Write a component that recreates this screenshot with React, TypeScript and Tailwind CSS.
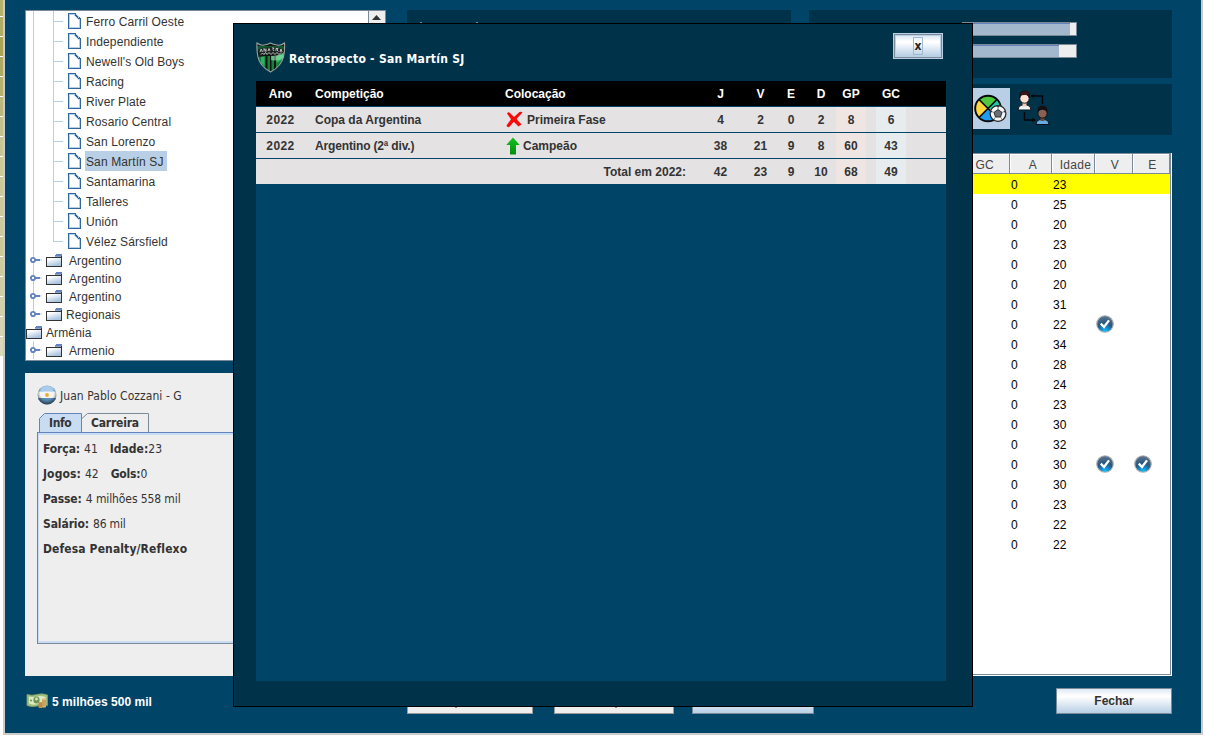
import React from "react";

const sans = "font-['Liberation_Sans',Arial,sans-serif]";
const tahoma = "font-['DejaVu_Sans_Condensed','DejaVu_Sans',sans-serif]";

const strips = [
  "bg-[#b5b16b]", "bg-[#b0ac62]", "bg-[#a9a552]", "bg-[#aeaa60]", "bg-[#b5b26f]", "bg-[#bcb87c]",
  "bg-[#c3c08a]", "bg-[#c8c592]", "bg-[#cac896]", "bg-[#cbc997]", "bg-[#cdcb9b]", "bg-[#cccb9b]",
  "bg-[#cbc998]", "bg-[#cdcb9c]", "bg-[#cfcda3]", "bg-[#d2d0a9]", "bg-[#d5d4b0]", "bg-[#d9d8b8]",
];

const DocIcon = () => (
  <svg width="13" height="16" viewBox="0 0 13 16" shapeRendering="crispEdges">
    <path d="M0 0H8L13 6V16H0Z" fill="#30659d" />
    <path d="M1 1H7L12 7V15H1Z" fill="#b8cfe5" />
    <path d="M2 2H6L11 8V14H2Z" fill="#fff" />
    <path d="M7 0h1v1h1v1h1v1h1v2h1v1h-2v-1h-1v-1h-1v-1h-1z" fill="#30659d" />
    <path d="M8 1h1v1h1v1h1v2h-1v-1h-1v-1h-1z" fill="#b8cfe5" />
    <path d="M8 2h1v1h1v1h-1v-1h-1z" fill="#30659d" />
  </svg>
);

const FolderIcon = () => (
  <svg width="16" height="13" viewBox="0 0 16 13" shapeRendering="crispEdges">
    <defs>
      <linearGradient id="fold" x1="0" y1="0" x2="0.5" y2="1">
        <stop offset="0.2" stopColor="#fff" />
        <stop offset="1" stopColor="#a9c3e0" />
      </linearGradient>
    </defs>
    <rect x="0" y="3" width="16" height="10" fill="#333" />
    <rect x="1" y="4" width="14" height="8" fill="url(#fold)" />
    <path d="M10 0h6v2h-7v-1h1z" fill="#6382bf" />
    <path d="M9 2h6v1h-6z" fill="#8aa5d4" />
    <rect x="15" y="2" width="1" height="11" fill="#333" />
  </svg>
);

const Handle = () => (
  <svg width="12" height="8" viewBox="0 0 12 8">
    <path d="M10 4H12" stroke="#b8cfe5" />
    <path d="M5 4H10" stroke="#6382bf" strokeWidth="2" />
    <circle cx="3" cy="4" r="2.1" fill="#fff" stroke="#6382bf" strokeWidth="1.9" />
  </svg>
);

const Leaf = ({ name, selected, last }: { name: string; selected?: boolean; last?: boolean }) => (
  <div className="flex h-5 shrink-0">
    <div className="ml-[7px] h-5 w-5 shrink-0 border-l border-[#b8cfe5]" />
    <div className={last ? "h-[11px] w-[10px] border-b border-l border-[#b8cfe5]" : "h-[11px] w-[10px] border-b border-[#b8cfe5]"}>
      {!last && <div className="h-5 w-px bg-[#b8cfe5]" />}
    </div>
    <div className="ml-[5px] mt-[2px]"><DocIcon /></div>
    <span className={selected ? "ml-[4px] h-5 bg-[#b8cfe5] pl-px pr-[3px] leading-[22px]" : "ml-[5px] leading-[22px]"}>{name}</span>
  </div>
);

const Branch = ({ name, wide, end }: { name: string; wide?: boolean; end?: boolean }) => (
  <div className="flex h-[18px] shrink-0">
    <div className="grid w-[17px] shrink-0 grid-cols-1 grid-rows-1 pl-[5px]">
      <div className={end ? "col-start-1 row-start-1 ml-[2px] h-[9px] w-px bg-[#b8cfe5]" : "col-start-1 row-start-1 ml-[2px] h-[18px] w-px bg-[#b8cfe5]"} />
      <div className="col-start-1 row-start-1 -ml-px mt-[5px]"><Handle /></div>
    </div>
    <div className="ml-[3px] mt-[3px]"><FolderIcon /></div>
    <span className={wide ? "ml-[7px] leading-[20px]" : "ml-[4px] leading-[20px]"}>{name}</span>
  </div>
);

const leaves = ["Ferro Carril Oeste", "Independiente", "Newell's Old Boys", "Racing", "River Plate", "Rosario Central", "San Lorenzo", "San Martín SJ", "Santamarina", "Talleres", "Unión", "Vélez Sársfield"];

const Flag = () => (
  <svg width="20" height="20" viewBox="0 0 20 20">
    <defs>
      <clipPath id="gl"><circle cx="10" cy="10" r="9.5" /></clipPath>
      <radialGradient id="sh" cx=".5" cy=".4" r=".62">
        <stop offset=".55" stopColor="#000" stopOpacity="0" />
        <stop offset="1" stopColor="#111" stopOpacity=".75" />
      </radialGradient>
    </defs>
    <g clipPath="url(#gl)">
      <rect width="20" height="20" fill="#f5f5f5" />
      <rect width="20" height="6.5" fill="#83b7e0" />
      <rect y="13" width="20" height="7" fill="#5a8fb9" />
      <circle cx="10" cy="10" r="1.9" fill="#f0a92c" />
      <ellipse cx="10" cy="4" rx="7" ry="3" fill="#fff" opacity=".3" />
      <rect width="20" height="20" fill="url(#sh)" />
    </g>
  </svg>
);

const Tick = () => (
  <svg width="18" height="18" viewBox="0 0 18 18">
    <defs>
      <radialGradient id="tk" cx=".5" cy=".95" r=".85">
        <stop offset="0" stopColor="#12c4ff" />
        <stop offset=".3" stopColor="#118bd0" />
        <stop offset=".6" stopColor="#28567c" />
        <stop offset="1" stopColor="#53718e" />
      </radialGradient>
    </defs>
    <circle cx="9" cy="9" r="8.3" fill="url(#tk)" stroke="#b4b2ae" strokeWidth="1.1" />
    <path d="M4.8 8.6 8 12 13 5.4" fill="none" stroke="#fff" strokeWidth="2.3" />
  </svg>
);

const Money = () => (
  <svg width="23" height="16" viewBox="0 0 23 16">
    <path d="M1 1.500Q6 3 11 1.500T21.500 2V12.500Q16 11.500 11 13T1 12.500Z" fill="#9fc07f" stroke="#7f9f62" strokeWidth=".8" />
    <path d="M3 3.500Q7 4.500 11 3.500T19.500 4V10.500Q15 10 11 11.200T3 10.500Z" fill="#dbe9c6" />
    <ellipse cx="10.500" cy="7" rx="3.100" ry="3.500" fill="#6d9653" />
    <circle cx="10.500" cy="6" r="1.400" fill="#d9e6c6" />
    <circle cx="5" cy="7.500" r="1" fill="#6d9653" />
    <rect x="12.500" y="9" width="4" height="6" rx="1" fill="#c79a55" />
    <rect x="16" y="5.500" width="4" height="9" rx="1" fill="#dfb875" />
    <path d="M16 8h4M16 10h4M16 12h4M12.500 11h4M12.500 13h4" stroke="#9b6c2b" strokeWidth=".6" />
  </svg>
);

const crestPath = "M1 1Q5 4 8 3Q12 2.500 14.500 1Q17 2.500 21 3Q25 4 28.500 1Q29 8 27.500 15Q25.500 24 14.500 30Q3.500 24 2 15Q.5 8 1 1Z";

const Crest = () => (
  <svg width="30" height="31" viewBox="0 0 30 31">
    <defs><clipPath id="cr"><path d={crestPath} /></clipPath></defs>
    <g clipPath="url(#cr)">
      <rect width="30" height="31" fill="#101513" />
      <path d="M1 4H28V8Q15 4 1 9Z" fill="#1a8f49" opacity=".55" />
      <path d="M2 15L9.500 14V31H2ZM11.500 14H14V31H11.500ZM15.500 14H18V31H15.500ZM20 14L28 12V29H20Z" fill="#14803b" />
      <path d="M5 15L8.500 14.500V24L5 21ZM20.500 14L27.500 12V17L20.500 21Z" fill="#2bb263" />
      <path d="M2 7.500Q15 3 28 7.500L26 13Q15 10 3.500 14Z" fill="#1d2321" />
      <path d="M15 14Q22 14 28 10V15Q23 20 15 18Z" fill="#a6ecc0" opacity=".55" />
    </g>
    <path d={crestPath} fill="none" stroke="#9aa5a0" strokeWidth="1.1" />
    <path d="M4 10l1.200-3 1.300 3M8 9.500v-3l2 3v-3M12 9l1-2.500 1 2.500M16 6h2l-1 1.500 1 1.500M20 9V6.500h2L21 8l1.500 1.500M24 10l1-3 1 3M5 12.500l1.500-1.500 1.500 1.500 1.500-2 1.500 2 2-2 2 2 2-2 2 2 2-2 2 2 2-2" fill="none" stroke="#c9cfcc" strokeWidth=".9" />
  </svg>
);

const PieBall = () => (
  <svg width="34" height="32" viewBox="0 0 34 32">
    <circle cx="14" cy="15.500" r="12.800" fill="#ffd83d" />
    <path d="M14 15.500L5 6Q14-1.500 23 6Z" fill="#4fc93f" />
    <path d="M14 15.500L23 6Q27 10 27 18Z" fill="#17d0b4" />
    <path d="M14 15.500L5 25Q14 32 24 25Z" fill="#1f9cf0" />
    <circle cx="14" cy="15.500" r="12.800" fill="none" stroke="#0a0a0a" strokeWidth="1.900" />
    <path d="M5 6.500L23 24.500M23 6.500L5 24.500" stroke="#0a0a0a" strokeWidth="1.700" />
    <circle cx="24" cy="20.500" r="7.900" fill="#f5f5f5" stroke="#222" strokeWidth="1.200" />
    <path d="M24 16.500L28 19.400L26.500 24H21.500L20 19.400Z" fill="#66707a" stroke="#222" strokeWidth=".9" />
    <path d="M24 16.500V13M28 19.400L31.500 18.200M26.500 24L28.500 27M21.500 24L19.500 27M20 19.400L16.500 18.200" stroke="#777" strokeWidth=".8" />
    <path d="M22 12.500h4l-2 2zM31.500 16.500v4l-1.800-2zM27 27.500l3-2.500-.5 2zM18.500 25l3 2.800-2-.5zM16.400 16.500v4l1.800-2z" fill="#333" />
  </svg>
);

const Swap = () => (
  <svg width="33" height="36" viewBox="0 0 33 36">
    <path d="M14.500 6H25.500V14M7.500 22V30H17" fill="none" stroke="#050708" strokeWidth="1.500" />
    <path d="M13.500 6l3-2v4zM19 30l-3.500-2.200v4.400z" fill="#050708" />
    <path d="M1 20Q1 15.500 5 15H10Q14 15.500 14 20Z" fill="#eef3f6" stroke="#0a1218" />
    <rect x="5.500" y="12" width="4" height="4.500" fill="#f2c7b4" />
    <circle cx="7.500" cy="8.500" r="4.700" fill="#ffe0d4" stroke="#1a0c0c" strokeWidth=".9" />
    <path d="M2.500 8Q1.500 1.500 7 1Q13.500 0 12.500 8Q11.500 5 9 4.500Q5 5 4 4.500Z" fill="#3a161a" stroke="#0d0708" strokeWidth=".6" />
    <path d="M19 34.500Q19 30 23 29.500H28Q32 30 32 34.500Z" fill="#62aee4" stroke="#0a1218" />
    <rect x="23.500" y="27" width="4" height="4" fill="#6e4b41" />
    <circle cx="25.500" cy="23.500" r="4.600" fill="#886054" stroke="#120c0c" strokeWidth=".9" />
    <path d="M20.500 22.500Q20 15.500 25.500 15.500Q31 15.500 30.500 22.500Q29 19.500 25.500 19.800Q22 19.500 20.500 22.500Z" fill="#141012" />
  </svg>
);

const ages = [23, 25, 20, 23, 20, 20, 31, 22, 34, 28, 24, 23, 30, 32, 30, 30, 23, 22, 22];

const heads = [
  { t: "GC", c: "pr-[15px] text-right" },
  { t: "A", c: "pl-[4px]" },
  { t: "Idade", c: "pl-[4px]" },
  { t: "V", c: "pl-[2px]" },
  { t: "E", c: "pl-[2px]" },
];

const metal = "bg-[linear-gradient(180deg,#dde8f3_0%,#ffffff_28%,#ffffff_32%,#b8cfe5_100%)]";
const cols = "grid grid-cols-[49px_191px_200px_49px_31px_30px_30px_30px_10px_30px_40px] text-center";

function Cells({ v }: { v: string[] }) {
  return (
    <>
      <span>{v[0]}</span><span>{v[1]}</span><span>{v[2]}</span><span>{v[3]}</span>
      <span className="h-[25px] bg-[#efe6e3]">{v[4]}</span>
      <span />
      <span className="h-[25px] bg-[#e7edef]">{v[5]}</span>
    </>
  );
}

export default function App() {
  return (
    <div className={`relative flex h-[740px] w-[1205px] overflow-hidden bg-white text-xs ${sans}`}>
      <div className="w-[3px]">
        <div className="h-4 bg-[#b5b16b]" />
        {strips.slice(1).map((c, i) => (
          <div key={i} className="h-5 border-t border-white"><div className={`h-[19px] w-[3px] ${c}`} /></div>
        ))}
      </div>
      <div className="flex h-[735px] w-[1200px] shrink-0 flex-col border-x-2 border-b-2 border-[#cbcbcb] bg-[#004468] px-[20px] pt-[10px]">
        <div className="flex h-[666px]">
          <div className="flex w-[361px] shrink-0 flex-col gap-3">
            <div className="flex h-[351px] border border-b-0 border-[#7a8a99] bg-white">
              <div className="flex h-[350px] flex-1 flex-col overflow-hidden border-b border-[#7a8a99] text-[12px] tracking-[0.12px] text-[#333]">
                {leaves.map((n, i) => <Leaf key={n} name={n} selected={i === 7} last={i === 11} />)}
                <Branch name="Argentino" wide />
                <Branch name="Argentino" wide />
                <Branch name="Argentino" wide />
                <Branch name="Regionais" end />
                <div className="flex h-[18px] shrink-0"><div className="mt-[3px]"><FolderIcon /></div><span className="ml-[4px] leading-[20px]">Armênia</span></div>
                <Branch name="Armenio" wide />
              </div>
              <div className="w-[17px] border-l border-[#7a8a99] bg-[#eee] pl-[3px] pt-[4px]">
                <svg width="9" height="5"><path d="M0 5L4.500 0L9 5Z" fill="#333" /></svg>
              </div>
            </div>
            <div className={`flex h-[303px] flex-col bg-[#eee] pl-3 text-[#333] ${tahoma}`}>
              <div className="mt-[12px] flex h-5 items-center"><Flag /><span className="ml-[3px] pt-px tracking-[0.06px]">Juan Pablo Cozzani - G</span></div>
              <div className="ml-[2px] mt-[8px] flex h-[19px] font-bold">
                <div className="grid w-[43px]">
                  <svg className="col-start-1 row-start-1" width="43" height="19"><path d="M.5 19V5.500L5.500 .5H42.500V19" fill="#c8ddf2" stroke="#6382bf" /></svg>
                  <span className="col-start-1 row-start-1 pl-[10px] leading-[20px] tracking-[-0.35px]">Info</span>
                </div>
                <div className="grid w-[67px]">
                  <svg className="col-start-1 row-start-1" width="67" height="19"><path d="M0 5.500L5.500 .5H66.500V19" fill="none" stroke="#7a8a99" /></svg>
                  <span className="col-start-1 row-start-1 pl-[9px] leading-[20px] tracking-[-0.2px]">Carreira</span>
                </div>
              </div>
              <div className="h-[212px] border border-b-[#7a8a99] border-l-[#6382bf] border-t-[#6382bf]">
                <div className="h-[210px] border-b-2 border-l border-t-2 border-[#c8ddf2] pl-[4px] pt-[2px] leading-[25px]">
                  <div className="flex"><b className="tracking-[-0.1px]">Força:</b><span className="ml-[4px]">41</span><b className="ml-[12px] tracking-[0.02px]">Idade:</b>23</div>
                  <div className="flex"><b className="tracking-[0.1px]">Jogos:</b><span className="ml-[4px]">42</span><b className="ml-[12px] tracking-[-0.2px]">Gols:</b>0</div>
                  <div className="flex"><b className="tracking-[-0.1px]">Passe:</b><span className="ml-[4px] tracking-[-0.1px]">4 milhões 558 mil</span></div>
                  <div className="flex"><b className="tracking-[-0.1px]">Salário:</b><span className="ml-[4px] tracking-[-0.2px]">86 mil</span></div>
                  <b className="tracking-[0.12px]">Defesa Penalty/Reflexo</b>
                </div>
              </div>
            </div>
          </div>
          <div className="ml-[21px] flex w-[765px] shrink-0 flex-col">
            <div className="flex h-[68px] gap-[18px]">
              <div className="flex w-[384px] bg-[#003349] pl-[13px] pt-[12px]"><i className="h-px w-[2px] bg-[#70828c]" /><i className="ml-[54px] h-px w-[2px] bg-[#70828c]" /></div>
              <div className="flex w-[363px] flex-col gap-2 bg-[#003349] pl-[153px] pt-[12px]">
                <div className="h-[14px] w-[115px] border border-[#7a8a99] bg-[#eee]"><div className="h-3 w-[107px] border-t border-[#6382bf] bg-[#a3b8cc]" /></div>
                <div className="h-[14px] w-[115px] border border-[#7a8a99] bg-[#eee]"><div className="h-3 w-[96px] border-t border-[#6382bf] bg-[#a3b8cc]" /></div>
              </div>
            </div>
            <div className="mt-[6px] flex h-[51px] bg-[#003349] pl-[563px] pt-[4px]">
              <div className="h-[41px] w-[40px] bg-[#b8cfe5] pl-[4px] pt-[5px]"><PieBall /></div>
              <div className="ml-[7px] mt-[2px]"><Swap /></div>
            </div>
            <div className="mt-[18px] flex h-[523px] flex-col border-b border-r border-white">
              <div className="flex h-[522px] flex-col border border-[#7a8a99] bg-white">
                <div className="grid h-5 grid-cols-[602px_42px_43px_38px_37px] text-center text-[12px] leading-[21px] tracking-[0.3px] text-[#444]">
                  {heads.map((h) => (
                    <div key={h.t} className="h-5 border-b border-r border-[#7a8a99] bg-[#eee]">
                      <div className={`h-[19px] border-l border-t border-white ${h.c}`}>{h.t}</div>
                    </div>
                  ))}
                </div>
                {ages.map((a, i) => (
                  <div key={i} className={i === 0 ? "grid h-5 grid-cols-[603px_42px_43px_38px_36px] bg-[#ffff00] leading-[22px] text-black" : "grid h-5 grid-cols-[603px_42px_43px_38px_36px] leading-[22px] text-black"}>
                    <span /><span>0</span><span>{a}</span>
                    <span className="pt-px">{(i === 7 || i === 14) && <Tick />}</span>
                    <span className="pt-px">{i === 14 && <Tick />}</span>
                  </div>
                ))}
              </div>
            </div>
          </div>
        </div>
        <div className="flex pt-[12px] font-bold">
          <div className="flex h-[26px] w-[382px] items-center text-white"><span className="ml-px"><Money /></span><span className="ml-[3px] pt-px tracking-[0.03px]">5 milhões 500 mil</span></div>
          <div className="flex h-[26px] w-[126px] items-end border border-[#999] bg-[#eee] pb-[5px] pl-[47px]"><i className="h-px w-[2px] bg-[#888]" /></div>
          <div className="ml-[21px] flex h-[26px] w-[120px] items-end border border-[#999] bg-[#eee] pb-[5px] pl-[60px]"><i className="h-px w-[2px] bg-[#888]" /></div>
          <div className={`ml-[18px] h-[26px] w-[122px] border border-[#7a8a99] ${metal}`} />
          <button className={`ml-auto mr-[9px] h-[26px] w-[116px] border border-[#7a8a99] font-bold leading-[25px] text-[#333] ${metal}`}>Fechar</button>
        </div>
      </div>

      <div className="absolute left-[233px] top-[23px] flex h-[684px] w-[740px] flex-col border border-black bg-[#003349] pl-[22px] font-bold">
        <div className="flex h-[57px] shrink-0">
          <div className="mt-[18px]"><Crest /></div>
          <h1 className={`ml-[3px] mt-[25px] text-[12px] leading-[20px] tracking-[0.28px] text-white ${tahoma}`}>Retrospecto - San Martín SJ</h1>
          <div className="ml-auto mr-[29px] mt-[9px] h-[26px] w-[50px] border border-[#b8cfe5] bg-[#7a8a99] p-px">
            <button className={`flex h-[22px] w-[46px] items-center justify-center border border-[#b8cfe5] ${metal}`}>
              <span className={`h-[18px] w-[10px] border border-[#a3b8cc] text-[12px] leading-[16px] text-[#222] ${tahoma}`}>x</span>
            </button>
          </div>
        </div>
        <div className="flex h-[600px] w-[690px] flex-col gap-px bg-[#004468] leading-[26px] text-[#333]">
          <div className={`h-[25px] bg-black text-white ${cols}`}>
            <span>Ano</span><span className="pl-[10px] text-left">Competição</span><span className="pl-[9px] text-left">Colocação</span><span>J</span><span>V</span><span>E</span><span>D</span><span>GP</span><span /><span>GC</span>
          </div>
          <div className={`h-[25px] bg-[#e4e2e3] ${cols}`}>
            <span className="tracking-[0.4px]">2022</span><span className="pl-[10px] text-left">Copa da Argentina</span>
            <span className="flex h-[25px] items-center pl-[10px]"><svg width="17" height="17" viewBox="0 0 17 17"><path d="M1 2.500Q2.500 .5 4 2L8 6L13.500 1Q15 .2 16.500 1.500L10.500 8L15.500 13.500L12.500 15.500L7.800 10.800L3.500 15.800Q1.500 17 .5 14.500L5 8.200Z" fill="#fb0909" /></svg><span className="ml-[4px] pt-px">Primeira Fase</span></span>
            <Cells v={["4", "2", "0", "2", "8", "6"]} />
          </div>
          <div className={`h-[25px] bg-[#e4e2e3] ${cols}`}>
            <span className="tracking-[0.4px]">2022</span><span className="pl-[10px] text-left tracking-[-0.15px]">Argentino (2ª div.)</span>
            <span className="flex h-[25px] items-center pl-[10px]"><svg width="14" height="18" viewBox="0 0 14 18"><defs><linearGradient id="up" x1="0" y1="0" x2="0" y2="1"><stop offset="0" stopColor="#11c41d" /><stop offset="1" stopColor="#078c0f" /></linearGradient></defs><path d="M7 0.500L13.700 8H10V17.500H4V8H.3Z" fill="url(#up)" /></svg><span className="ml-[3px] pt-px">Campeão</span></span>
            <Cells v={["38", "21", "9", "8", "60", "43"]} />
          </div>
          <div className={`h-[25px] bg-[#e4e2e3] ${cols}`}>
            <span /><span /><span className="pr-[10px] text-right">Total em 2022:</span>
            <Cells v={["42", "23", "9", "10", "68", "49"]} />
          </div>
        </div>
      </div>
    </div>
  );
}
